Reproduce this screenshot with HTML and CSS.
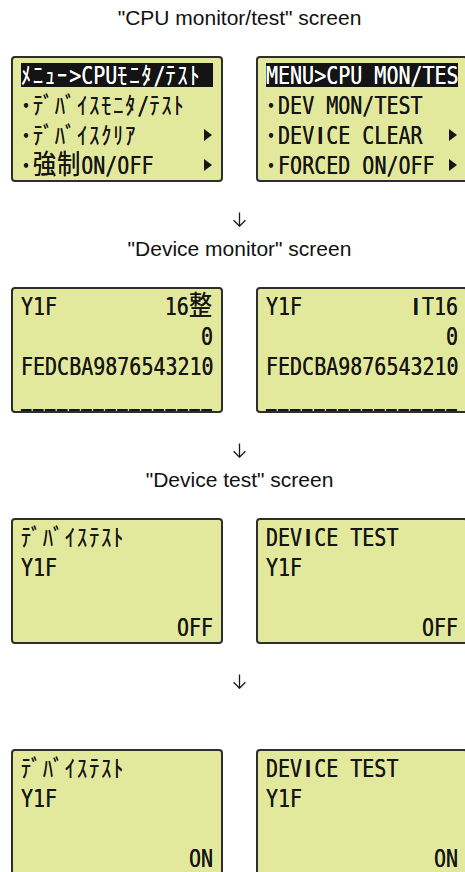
FILE: index.html
```html
<!DOCTYPE html>
<html lang="ja">
<head>
<meta charset="utf-8">
<title>CPU monitor/test</title>
<link rel="stylesheet" href="styles.css">
</head>
<body>
<main class="page">
  <section class="step first">
    <h2 class="title">"CPU monitor/test" screen</h2>
    <div class="pair">
      <div class="lcd">
        <div class="row hl"><span class="tx"><span class="k">ﾒﾆｭｰ</span>&gt;CPU<span class="k">ﾓﾆﾀ</span>/<span class="k">ﾃｽﾄ</span></span></div>
        <div class="row"><span class="tx"><span class="k"><span class="dot">･</span>ﾃﾞﾊﾞｲｽﾓﾆﾀ</span>/<span class="k">ﾃｽﾄ</span></span></div>
        <div class="row"><span class="tx"><span class="k"><span class="dot">･</span>ﾃﾞﾊﾞｲｽｸﾘｱ</span></span><span class="tri"></span></div>
        <div class="row"><span class="tx"><span class="k"><span class="dot">･</span></span><span class="w">強制</span>ON/OFF</span><span class="tri"></span></div>
      </div>
      <div class="lcd">
        <div class="row hl"><span class="tx">MENU&gt;CPU MON/TES</span></div>
        <div class="row"><span class="tx"><span class="k"><span class="dot">･</span></span>DEV MON/TEST</span></div>
        <div class="row"><span class="tx"><span class="k"><span class="dot">･</span></span>DEV<span class="ib">I</span>CE CLEAR</span><span class="tri"></span></div>
        <div class="row"><span class="tx"><span class="k"><span class="dot">･</span></span>FORCED ON/OFF</span><span class="tri"></span></div>
      </div>
    </div>
  </section>

  <section class="step">
    <div class="arrow"><svg width="15" height="15" viewBox="0 0 15 15"><path d="M7.5 0.5V14.2M1.6 8.3L7.5 14.2L13.4 8.3" fill="none" stroke="#1a1a1a" stroke-width="1.3"/></svg></div>
    <h2 class="title">"Device monitor" screen</h2>
    <div class="pair">
      <div class="lcd">
        <div class="row"><span class="tx">Y1F</span><span class="tx">16<span class="w">整</span></span></div>
        <div class="row end"><span class="tx">0</span></div>
        <div class="row"><span class="tx">FEDCBA9876543210</span></div>
        <div class="row us"><span class="tx">________________</span></div>
      </div>
      <div class="lcd">
        <div class="row"><span class="tx">Y1F</span><span class="tx"><span class="ib">I</span>T16</span></div>
        <div class="row end"><span class="tx">0</span></div>
        <div class="row"><span class="tx">FEDCBA9876543210</span></div>
        <div class="row us"><span class="tx">________________</span></div>
      </div>
    </div>
  </section>

  <section class="step">
    <div class="arrow"><svg width="15" height="15" viewBox="0 0 15 15"><path d="M7.5 0.5V14.2M1.6 8.3L7.5 14.2L13.4 8.3" fill="none" stroke="#1a1a1a" stroke-width="1.3"/></svg></div>
    <h2 class="title">"Device test" screen</h2>
    <div class="pair">
      <div class="lcd">
        <div class="row"><span class="tx"><span class="k">ﾃﾞﾊﾞｲｽﾃｽﾄ</span></span></div>
        <div class="row"><span class="tx">Y1F</span></div>
        <div class="row"></div>
        <div class="row end"><span class="tx">OFF</span></div>
      </div>
      <div class="lcd">
        <div class="row"><span class="tx">DEV<span class="ib">I</span>CE TEST</span></div>
        <div class="row"><span class="tx">Y1F</span></div>
        <div class="row"></div>
        <div class="row end"><span class="tx">OFF</span></div>
      </div>
    </div>
  </section>

  <section class="step">
    <div class="arrow"><svg width="15" height="15" viewBox="0 0 15 15"><path d="M7.5 0.5V14.2M1.6 8.3L7.5 14.2L13.4 8.3" fill="none" stroke="#1a1a1a" stroke-width="1.3"/></svg></div>
    <div class="title blank"></div>
    <div class="pair">
      <div class="lcd">
        <div class="row"><span class="tx"><span class="k">ﾃﾞﾊﾞｲｽﾃｽﾄ</span></span></div>
        <div class="row"><span class="tx">Y1F</span></div>
        <div class="row"></div>
        <div class="row end"><span class="tx">ON</span></div>
      </div>
      <div class="lcd">
        <div class="row"><span class="tx">DEV<span class="ib">I</span>CE TEST</span></div>
        <div class="row"><span class="tx">Y1F</span></div>
        <div class="row"></div>
        <div class="row end"><span class="tx">ON</span></div>
      </div>
    </div>
  </section>
</main>
</body>
</html>
```

FILE: styles.css
```css
html, body {
  margin: 0;
  padding: 0;
  background: #ffffff;
}
body {
  width: 465px;
  height: 872px;
  overflow: hidden;
}
.page {
  width: 457px;
  margin-left: 11px;
  padding-top: 6px;
  display: flex;
  flex-direction: column;
}
.step {
  display: flex;
  flex-direction: column;
}
.title {
  margin: 10px 0 0 0;
  height: 24px;
  line-height: 24px;
  text-align: center;
  font-family: "Liberation Sans", Arial, sans-serif;
  font-size: 21px;
  font-weight: normal;
  color: #111;
}
.first .title {
  margin-top: 0;
}
.arrow {
  margin-top: 30px;
  height: 15px;
  display: flex;
  justify-content: center;
}
.arrow svg {
  display: block;
}
.pair {
  margin-top: 26px;
  display: flex;
  gap: 33px;
}
.lcd {
  box-sizing: border-box;
  width: 212px;
  height: 126px;
  flex: none;
  border: 2px solid #2e2e2e;
  border-radius: 4px;
  background: #e2e89c;
  padding: 2px 8px 0 8px;
  color: #161616;
  font-family: "DejaVu Sans Mono", "Noto Sans CJK JP", monospace;
  font-size: 20px;
}
.row {
  height: 30px;
  line-height: 30px;
  display: flex;
  align-items: center;
  justify-content: space-between;
  white-space: pre;
}
.row.end {
  justify-content: flex-end;
}
.row.hl {
  height: 24px;
  line-height: 24px;
  margin: 3px 0;
  background: #141414;
  color: #ffffff;
}
.tx {
  display: inline-block;
  transform: translateY(1px) scaleY(1.2);
  text-shadow: 0 0 0.35px currentColor;
}
.k {
  font-family: "Noto Sans CJK JP", sans-serif;
  font-size: 20px;
  line-height: 20px;
  letter-spacing: 2.04px;
}
.dot {
  font-weight: bold;
}
.w {
  font-family: "Noto Sans CJK JP", sans-serif;
  font-size: 23px;
  line-height: 20px;
  letter-spacing: 1.08px;
}
.ib {
  display: inline-block;
  width: 12.04px;
  line-height: 20px;
  text-align: center;
  font-family: "Liberation Sans", Arial, sans-serif;
  font-weight: bold;
}
.tri {
  width: 0;
  height: 0;
  margin-right: 1px;
  border-left: 8px solid #161616;
  border-top: 6.5px solid transparent;
  border-bottom: 6.5px solid transparent;
}
.row.us {
  align-items: flex-end;
}
.us .tx {
  font-size: 17px;
  font-weight: bold;
  letter-spacing: 1.8px;
  line-height: 20px;
  margin-bottom: 3px;
}
```
